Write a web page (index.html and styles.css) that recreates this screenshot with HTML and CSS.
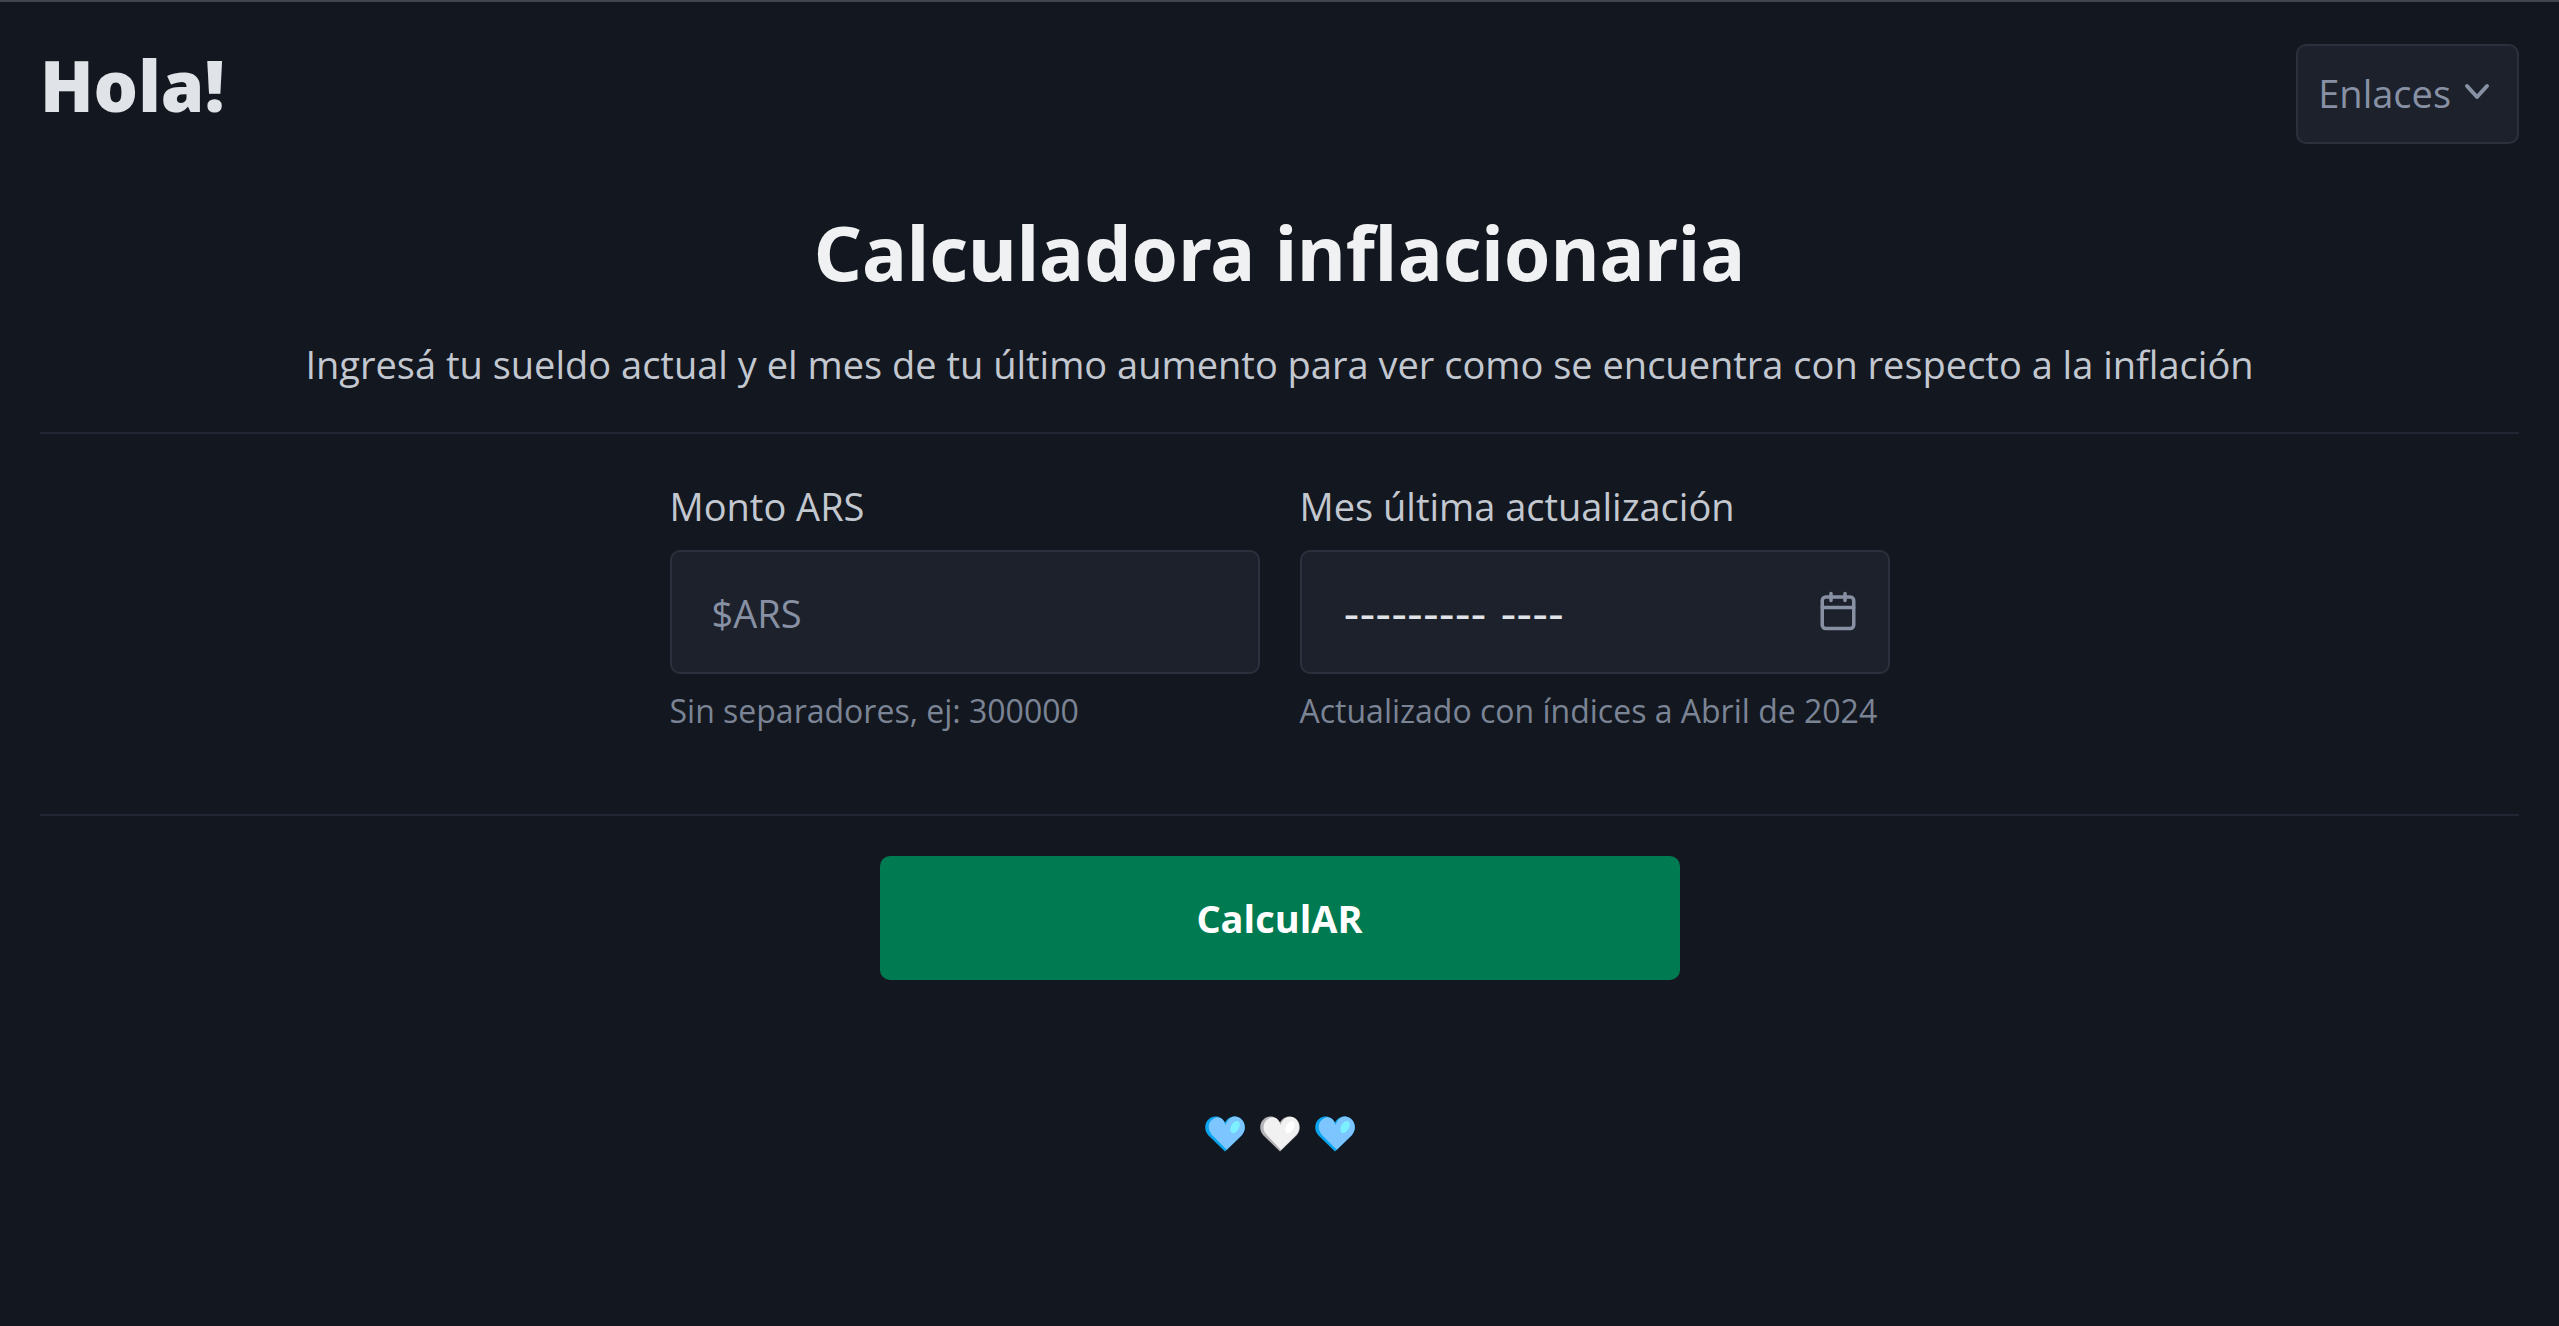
FILE: index.html
```html
<!DOCTYPE html>
<html lang="es">
<head>
<meta charset="utf-8">
<meta name="viewport" content="width=device-width, initial-scale=1">
<title>Calculadora inflacionaria</title>
<link rel="stylesheet" href="styles.css">
</head>
<body>
<svg class="defs" aria-hidden="true">
  <clipPath id="heart-clip"><path d="M20 35.500 3.500 19.500C-1.500 14-.5 6 4.500 2.500 10-1.300 17 .5 20 6.500 23 .5 30-1.300 35.500 2.500c5 3.500 6 11.500 1 17z"/></clipPath>
</svg>
<header class="topbar">
  <strong class="brand">Hola!</strong>
  <nav>
    <button class="dropdown" type="button" aria-haspopup="menu">
      Enlaces
      <svg class="chevron" viewBox="0 0 40 40" aria-hidden="true"><path d="M10 13l10 11 10-11"/></svg>
    </button>
  </nav>
</header>
<main>
  <section class="intro">
    <h1>Calculadora inflacionaria</h1>
    <p>Ingresá tu sueldo actual y el mes de tu último aumento para ver como se encuentra con respecto a la inflación</p>
  </section>
  <form class="calculator">
    <div class="fields">
      <div class="field">
        <label for="monto">Monto ARS</label>
        <input id="monto" type="text" inputmode="numeric" placeholder="$ARS" aria-describedby="monto-help">
        <small id="monto-help">Sin separadores, ej: 300000</small>
      </div>
      <div class="field">
        <label for="mes">Mes última actualización</label>
        <div class="month">
          <input id="mes" type="text" value="--------- ----" aria-describedby="mes-help">
          <svg class="calendar" viewBox="0 0 24 24" aria-hidden="true"><rect x="3" y="4" width="18" height="18" rx="2"/><path d="M16 2v4M8 2v4M3 10h18"/></svg>
        </div>
        <small id="mes-help">Actualizado con índices a Abril de 2024</small>
      </div>
    </div>
    <div class="actions"><button class="submit" type="submit">CalculAR</button></div>
  </form>
</main>
<footer class="hearts">
  <svg class="heart" viewBox="0 0 40 36" aria-hidden="true"><g clip-path="url(#heart-clip)"><path fill="#0aa5ee" d="M0 0h40v36H0z"/><path fill="#7dc5ff" d="M23 35 7 19C2 13 3 6 8 3c5-4 11-1 12.500 6C23 1 31-2 36 1c7 5 6 14 1 19z"/><ellipse cx="30" cy="11" rx="4" ry="6.500" transform="rotate(30 30 11)" fill="#7cf0ff"/></g></svg>
  <svg class="heart" viewBox="0 0 40 36" aria-hidden="true"><g clip-path="url(#heart-clip)"><path fill="#b5b3b7" d="M0 0h40v36H0z"/><path fill="#f1f1f2" d="M21 34 6 18C2 13 3 6 8 3c5-4 11-1 12.500 6C23 1 30-1 35 2c5 4 5 12 2 16z"/><ellipse cx="30" cy="11" rx="4" ry="6.500" transform="rotate(30 30 11)" fill="#fff"/></g></svg>
  <svg class="heart" viewBox="0 0 40 36" aria-hidden="true"><g clip-path="url(#heart-clip)"><path fill="#0aa5ee" d="M0 0h40v36H0z"/><path fill="#7dc5ff" d="M23 35 7 19C2 13 3 6 8 3c5-4 11-1 12.500 6C23 1 31-2 36 1c7 5 6 14 1 19z"/><ellipse cx="30" cy="11" rx="4" ry="6.500" transform="rotate(30 30 11)" fill="#7cf0ff"/></g></svg>
</footer>
</body>
</html>
```
FILE: styles.css
```css
:root {
  --bg: #13171f;
  --field: #1c212c;
  --border: #2a303c;
  --rule: #202632;
  --text: #c2c7d0;
  --muted: #8891a4;
}

* { box-sizing: border-box; }

body {
  margin: 0;
  min-height: 100vh;
  padding: 0 40px;
  border-top: 2px solid #42464c;
  background: var(--bg);
  color: var(--text);
  font: 38px/60px "Open Sans", "Noto Sans", sans-serif;
}

button, input { font: inherit; }

.defs { position: absolute; width: 0; height: 0; }

.topbar {
  display: flex;
  justify-content: space-between;
  align-items: flex-start;
  height: 182px;
  padding-top: 42px;
}

.brand {
  color: #e0e3e7;
  font-family: "Noto Sans", sans-serif;
  font-size: 70px;
  font-weight: 900;
  line-height: 82px;
}

.dropdown {
  display: flex;
  align-items: center;
  gap: 6px;
  height: 100px;
  padding: 0 20px 2px;
  border: 2px solid var(--border);
  border-radius: 10px;
  background: var(--field);
  color: var(--muted);
}

.chevron {
  width: 40px;
  height: 40px;
  fill: none;
  stroke: var(--muted);
  stroke-width: 4;
  stroke-linecap: round;
  stroke-linejoin: round;
}

.intro {
  padding-bottom: 38px;
  border-bottom: 2px solid var(--rule);
  text-align: center;
}

h1 {
  margin: 0 0 32px;
  padding-top: 18px;
  color: #f0f1f3;
  font-family: "Noto Sans", sans-serif;
  font-size: 75px;
  font-weight: 700;
  line-height: 100px;
}

.intro p { margin: 0; }

.fields {
  display: grid;
  grid-template-columns: 1fr 1fr;
  gap: 40px;
  max-width: 1220px;
  margin: 0 auto;
}

.calculator { padding-top: 42px; }

.field {
  display: flex;
  flex-direction: column;
  padding-bottom: 78px;
}

.field label { margin-bottom: 14px; }

.field input {
  display: block;
  width: 100%;
  height: 124px;
  padding: 2px 40px 0;
  border: 2px solid var(--border);
  border-radius: 10px;
  background: var(--field);
  color: #e0e3e7;
}

.field input::placeholder { color: var(--muted); opacity: 1; }

.field small {
  margin-top: 12px;
  color: #7b8495;
  font-size: 32px;
  line-height: 50px;
}

.month { position: relative; }

.month input {
  padding-right: 100px;
  padding-left: 42px;
  font-family: "DejaVu Sans", sans-serif;
  font-size: 44px;
}

.calendar {
  position: absolute;
  top: 40px;
  right: 31px;
  width: 42px;
  height: 42px;
  fill: none;
  stroke: var(--muted);
  stroke-width: 2;
  stroke-linecap: round;
  stroke-linejoin: round;
  pointer-events: none;
}

.actions {
  display: flex;
  justify-content: center;
  padding-top: 40px;
  border-top: 2px solid var(--rule);
}

.submit {
  width: 800px;
  max-width: 100%;
  height: 124px;
  border: 0;
  border-radius: 10px;
  background: #007a50;
  color: #fff;
  font-weight: 700;
}

.hearts {
  display: flex;
  justify-content: center;
  gap: 15px;
  padding-top: 136px;
}

.heart { width: 40px; height: 36px; }
```
